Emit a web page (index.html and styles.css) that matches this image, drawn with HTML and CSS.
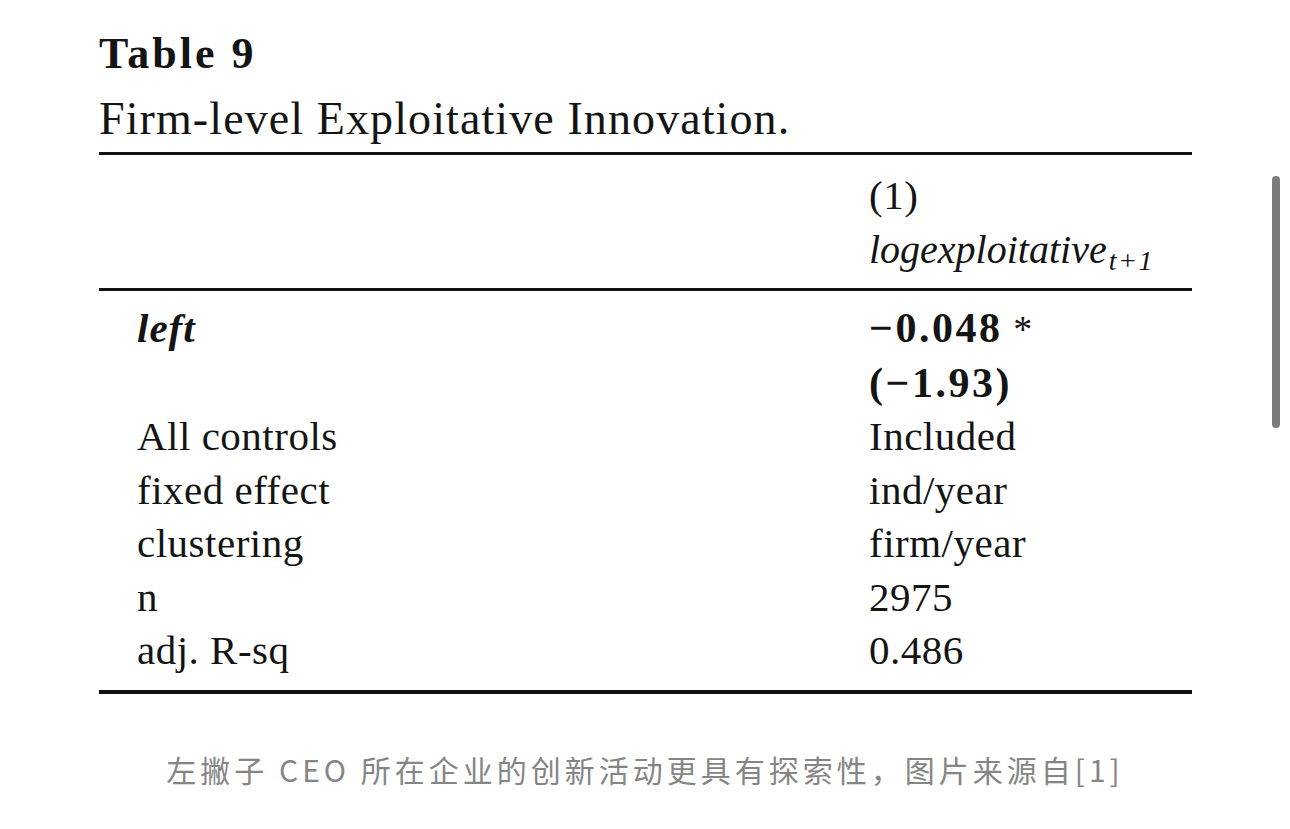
FILE: index.html
```html
<!DOCTYPE html>
<html lang="zh-CN">
<head>
<meta charset="utf-8">
<title>Table 9</title>
<link rel="stylesheet" href="styles.css">
</head>
<body>
<div class="figure">
  <div class="fig-head">
    <div class="fig-label">Table 9</div>
    <div class="fig-title">Firm-level Exploitative Innovation.</div>
  </div>
  <table class="reg">
    <thead>
      <tr class="h1"><th class="lab"></th><th class="val">(1)</th></tr>
      <tr class="h2"><th class="lab"></th><th class="val"><span class="dep">logexploitative</span><span class="sub">t+1</span></th></tr>
    </thead>
    <tbody>
      <tr class="first"><td class="lab"><span class="bi">left</span></td><td class="val"><span class="b">−0.048</span> <span class="star">*</span></td></tr>
      <tr><td class="lab"></td><td class="val"><span class="b">(−1.93)</span></td></tr>
      <tr><td class="lab">All controls</td><td class="val">Included</td></tr>
      <tr><td class="lab">fixed effect</td><td class="val">ind/year</td></tr>
      <tr><td class="lab">clustering</td><td class="val">firm/year</td></tr>
      <tr><td class="lab">n</td><td class="val">2975</td></tr>
      <tr class="last"><td class="lab">adj. R-sq</td><td class="val">0.486</td></tr>
    </tbody>
  </table>
</div>
<p class="note">左撇子 CEO 所在企业的创新活动更具有探索性，图片来源自[1]</p>
<div class="scrollbar"></div>
</body>
</html>
```
FILE: styles.css
```css
html, body {
  margin: 0;
  padding: 0;
  background: #ffffff;
}

body {
  width: 1290px;
  height: 829px;
  overflow: hidden;
  font-family: "Liberation Serif", "Times New Roman", serif;
  color: #141414;
}

.figure {
  margin-left: 99px;
  width: 1093px;
}

.fig-head {
  padding-top: 29px;
}

.fig-label {
  font-weight: 700;
  font-size: 44px;
  line-height: 50px;
  letter-spacing: 3px;
}

.fig-title {
  margin-top: 12px;
  font-size: 46px;
  line-height: 56px;
  letter-spacing: 1.1px;
}

.reg {
  margin-top: 5px;
  width: 1093px;
  border-collapse: separate;
  border-spacing: 0;
  font-size: 41px;
  line-height: 53.5px;
  letter-spacing: 0.5px;
}

.reg th,
.reg td {
  padding: 0;
  text-align: left;
  font-weight: 400;
  white-space: nowrap;
  vertical-align: top;
}

.reg .lab {
  width: 732px;
  padding-left: 38px;
}

.reg .val {
  width: 323px;
}

.reg thead .h1 th {
  border-top: 3px solid #111;
  padding-top: 14px;
}

.reg thead .h2 th {
  border-bottom: 3px solid #111;
  padding-bottom: 12px;
}

.reg tbody .first td {
  padding-top: 11px;
}

.reg tbody .last td {
  border-bottom: 4px solid #111;
  padding-bottom: 12px;
}

.dep {
  font-style: italic;
  font-size: 40px;
  letter-spacing: 0;
}

.sub {
  font-style: italic;
  font-size: 28px;
  line-height: 0;
  vertical-align: -7px;
  letter-spacing: 1.5px;
  margin-left: 2px;
}

.b {
  font-weight: 700;
  font-size: 42px;
  letter-spacing: 2.5px;
}

.bi {
  font-weight: 700;
  font-style: italic;
  letter-spacing: 1px;
}

.star {
  font-size: 38px;
}

.note {
  margin: 55px 0 0;
  text-align: center;
  font-family: "Noto Sans CJK SC", "Noto Sans", sans-serif;
  font-size: 30px;
  line-height: 40px;
  letter-spacing: 4px;
  color: #858585;
}

.scrollbar {
  position: fixed;
  top: 176px;
  right: 10px;
  width: 8px;
  height: 252px;
  border-radius: 4px;
  background: #7b7b7b;
}
```
